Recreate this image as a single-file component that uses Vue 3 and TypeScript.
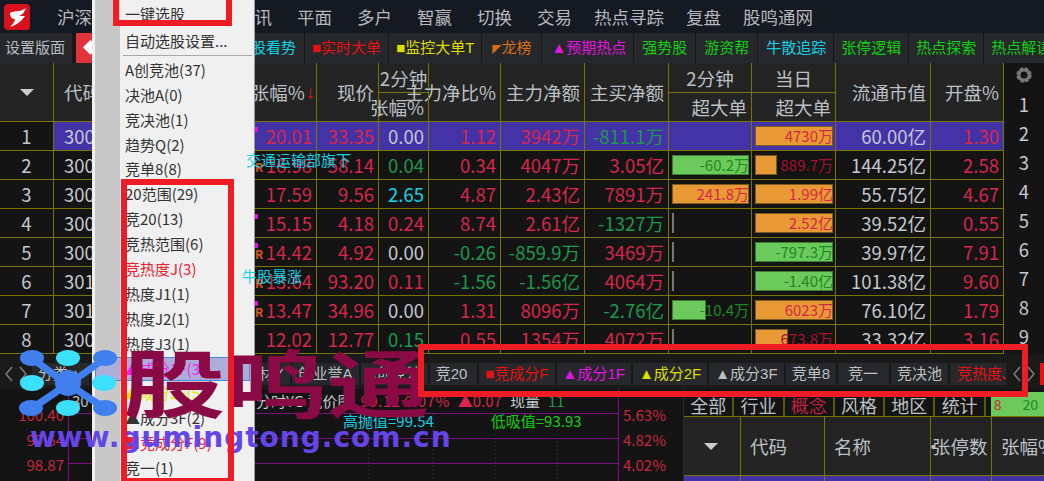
<template>
  <div class="app">
    <header class="menubar">
      <svg class="logo" viewBox="0 0 26 26" width="26" height="26">
        <rect width="26" height="26" rx="4" fill="#d8111c" />
        <path d="M6 9 C10 6 15 9 22 4 C20 9 18 11 15 12 L21 12 C17 18 12 21 6 23 C9 20 11 17 11 15 C8 15 6 13 6 9 Z" fill="#fff" />
      </svg>
      <nav class="menu-items">
        <span v-for="m in menus" :key="m" :class="{ long: m.length === 4 }">{{ m }}</span>
      </nav>
    </header>

    <div class="toolbar">
      <button v-for="t in tools" :key="t.label" class="tool" :class="t.cls">
        <small v-if="t.mark">{{ t.mark }}</small>{{ t.label }}
      </button>
    </div>

    <main class="board">
      <section class="quotes">
        <div class="thead">
          <div v-for="h in headers" :key="h.label + h.cls" class="th" :class="h.cls">
            {{ h.label }}<span v-if="h.cls.includes('sort')" class="sort-arrow">↓</span>
          </div>
        </div>
        <div v-for="(r, i) in rows" :key="r.no" class="tr" :class="{ selected: i === 0 }">
          <div class="td no">{{ r.no }}</div>
          <div class="td code">{{ r.code }}</div>
          <div class="td"></div>
          <div class="td red mark-cell">
            <i v-if="r.dot" class="dot"></i>
            <b v-if="r.tagR" class="tag-r">R</b>
            <span v-if="r.note" class="note" :class="r.noteCls">{{ r.note }}</span>
            {{ r.chg }}
          </div>
          <div class="td red">{{ r.price }}</div>
          <div class="td" :class="r.speedCls">{{ r.speed }}</div>
          <div class="td" :class="tone(r.ratio)">{{ r.ratio }}</div>
          <div class="td" :class="tone(r.net)">{{ r.net }}</div>
          <div class="td" :class="tone(r.buy)">{{ r.buy }}</div>
          <div class="td bar-cell">
            <i v-if="r.bar2" class="bar" :class="r.bar2.c" :style="{ width: r.bar2.w + '%' }"></i>
            <span class="bar-text" :class="r.bar2?.t">{{ r.bar2?.v }}</span>
          </div>
          <div class="td bar-cell">
            <i v-if="r.bar1" class="bar" :class="r.bar1.c" :style="{ width: r.bar1.w + '%' }"></i>
            <span class="bar-text" :class="r.bar1?.t">{{ r.bar1?.v }}</span>
          </div>
          <div class="td light">{{ r.cap }}</div>
          <div class="td red">{{ r.open }}</div>
        </div>
      </section>
      <aside class="rail">
        <svg class="gear" viewBox="0 0 20 20" width="18" height="18">
          <circle cx="10" cy="10" r="6.8" fill="none" stroke="#777" stroke-width="3.6" stroke-dasharray="3.6 1.75" />
          <circle cx="10" cy="10" r="5.6" fill="none" stroke="#777" stroke-width="3.4" />
        </svg>
        <span v-for="n in 9" :key="n">{{ n }}</span>
      </aside>
    </main>

    <div class="tabbar">
      <svg class="arrows" width="30" height="22" viewBox="0 0 30 22">
        <path d="M12 4 L6 11 L12 18M20 4 L26 11 L20 18" fill="none" stroke="#808080" stroke-width="1.4" />
      </svg>
      <span class="tab plain">分类▲</span>
      <span class="tab grow">题材Y</span>
      <span v-for="t in tabs" :key="t.label" class="tab" :class="t.cls">{{ t.label }}</span>
      <svg class="arrows" width="30" height="22" viewBox="0 0 30 22">
        <path d="M12 4 L6 11 L12 18M20 4 L26 11 L20 18" fill="none" stroke="#808080" stroke-width="1.4" />
      </svg>
      <i class="tab-flag"></i>
    </div>

    <div class="lower">
      <section class="chart">
        <svg class="grid" width="683" height="93" viewBox="0 0 683 93">
          <g stroke="#7d0f86" fill="none">
            <path d="M68.5 0V93M618.5 0V93M68 24.5H618M68 49.5H618M68 74.5H618" />
            <path d="M368.5 25V93M433.5 25V93M495.5 25V93M557.5 25V93" stroke-dasharray="1 3" />
          </g>
        </svg>
        <div class="chart-title">
          <span class="stock-code">30</span>
          <span class="light">分时YG 竞价图</span>
          <span class="red quote-now">99.12 0.07%</span>
          <span class="red">▲0.07</span>
          <span class="light">现量</span>
          <span class="green">11</span>
        </div>
        <div class="levels">
          <span class="cyan">高抛值=99.54</span>
          <span class="lime">低吸值=93.93</span>
        </div>
        <div class="axis left"><span>100.40</span><span>99.64</span><span>98.87</span></div>
        <div class="axis right"><span>5.63%</span><span>4.82%</span><span>4.02%</span></div>
      </section>

      <section class="sector">
        <div class="sector-tabs">
          <span v-for="s in sectorTabs" :key="s" :class="{ hot: s === '概念' }">{{ s }}</span>
          <div class="sector-meter"><em>8</em><b>20</b></div>
        </div>
        <div class="sector-head">
          <div class="sh arrow"><i class="tri"></i></div>
          <div class="sh">代码</div>
          <div class="sh name">名称<i>•</i></div>
          <div class="sh tight">张停数</div>
          <div class="sh">张幅%</div>
        </div>
        <div class="sector-row"><span></span><span></span><span>大模型</span><span></span><span></span></div>
      </section>
    </div>

    <!-- 下拉菜单 -->
    <div class="popup">
      <div class="popup-item first">一键选股</div>
      <div class="popup-item">自动选股设置...</div>
      <div class="popup-sep"></div>
      <div v-for="p in popup" :key="p.label" class="popup-item" :class="p.cls">{{ p.label }}</div>
    </div>

    <!-- 水印 -->
    <svg class="wm-logo" viewBox="0 0 116 70" width="116" height="70">
      <g stroke="#3f80ee" stroke-width="7" fill="none">
        <path d="M32 8 Q60 30 68 33 Q76 30 105 8M32 58 Q60 40 68 33 Q76 40 105 58" />
      </g>
      <circle cx="68" cy="33" r="13" fill="#3f80ee" />
      <g fill="#3f80ee">
        <ellipse cx="32" cy="8" rx="12" ry="8" />
        <ellipse cx="105" cy="8" rx="12" ry="8" />
        <ellipse cx="31" cy="58" rx="12" ry="8" />
        <ellipse cx="105" cy="58" rx="12" ry="8" />
      </g>
      <g fill="#3be0ff">
        <ellipse cx="68" cy="8" rx="12" ry="8" />
        <ellipse cx="32" cy="33" rx="12" ry="8" />
        <ellipse cx="104" cy="33" rx="12" ry="8" />
        <ellipse cx="68" cy="58" rx="12" ry="8" />
      </g>
    </svg>
    <div class="wm-title">股鸣通</div>
    <div class="wm-url">www.gumingtong.com.cn</div>

    <!-- 红色标注框 -->
    <i class="frame f1"></i>
    <i class="frame f2"></i>
    <i class="frame f3"></i>
  </div>
</template>

<script setup lang="ts">
interface Bar {
  v: string
  w: number
  c: string
  t: string
}

interface Row {
  no: number
  code: string
  chg: string
  price: string
  speed: string
  speedCls: string
  ratio: string
  net: string
  buy: string
  bar2?: Bar
  bar1?: Bar
  cap: string
  open: string
  dot?: boolean
  tagR?: boolean
  note?: string
  noteCls?: string
}

const menus = ['沪深', '板块', '选股', '资讯', '平面', '多户', '智赢', '切换', '交易', '热点寻踪', '复盘', '股鸣通网']

const tools = [
  { label: '设置版面', cls: 'gray first' },
  { label: '◆涨停', cls: 'redbg' },
  { label: '竞价大盘分析', cls: 'gray spacer' },
  { label: '个股看势', cls: 'cyan trail' },
  { label: '■实时大单', cls: 'red-t' },
  { label: '■监控大单T', cls: 'yellow' },
  { label: '龙榜', mark: '◤', cls: 'orange wide' },
  { label: '▲预期热点', cls: 'magenta wide-l' },
  { label: '强势股', cls: 'lime roomy' },
  { label: '游资帮', cls: 'lime roomy' },
  { label: '牛散追踪', cls: 'cyan lead' },
  { label: '张停逻辑', cls: 'lime' },
  { label: '热点探索', cls: 'lime' },
  { label: '热点解读', cls: 'lime' },
]

const headers = [
  { label: '', cls: 'span2 center caret' },
  { label: '代码', cls: 'span2 left' },
  { label: '', cls: 'span2' },
  { label: '张幅%', cls: 'span2 sort' },
  { label: '现价', cls: 'span2' },
  { label: '2分钟', cls: 'top center' },
  { label: '主力净比%', cls: 'span2' },
  { label: '主力净额', cls: 'span2' },
  { label: '主买净额', cls: 'span2' },
  { label: '2分钟', cls: 'top center' },
  { label: '当日', cls: 'top center' },
  { label: '流通市值', cls: 'span2' },
  { label: '开盘%', cls: 'span2' },
  { label: '张幅%', cls: 'bottom c6' },
  { label: '超大单', cls: 'bottom c10' },
  { label: '超大单', cls: 'bottom c11' },
]

const orange = (v: string, w: number, t = 'red'): Bar => ({ v, w, c: 'orange-bar', t })
const green = (v: string, w: number, t = 'dgreen'): Bar => ({ v, w, c: 'green-bar', t })
const sliver: Bar = { v: '', w: 3, c: 'gray-bar', t: '' }

const rows: Row[] = [
  { no: 1, code: '300', chg: '20.01', price: '33.35', speed: '0.00', speedCls: 'light', ratio: '1.12', net: '3942万', buy: '-811.1万', bar1: orange('4730万', 100), cap: '60.00亿', open: '1.30', dot: true },
  { no: 2, code: '300', chg: '16.98', price: '58.14', speed: '0.04', speedCls: 'green', ratio: '0.34', net: '4047万', buy: '3.05亿', bar2: green('-60.2万', 100), bar1: orange('889.7万', 26, 'dred'), cap: '144.25亿', open: '2.58', tagR: true, note: '交通运输部旗下', noteCls: 'note-a' },
  { no: 3, code: '300', chg: '17.59', price: '9.56', speed: '2.65', speedCls: 'cyan', ratio: '4.87', net: '2.43亿', buy: '7891万', bar2: orange('241.8万', 100), bar1: orange('1.99亿', 100), cap: '55.75亿', open: '4.67' },
  { no: 4, code: '300', chg: '15.15', price: '4.18', speed: '0.24', speedCls: 'red', ratio: '8.74', net: '2.61亿', buy: '-1327万', bar2: sliver, bar1: orange('2.52亿', 100), cap: '39.52亿', open: '0.55', dot: true },
  { no: 5, code: '300', chg: '14.42', price: '4.92', speed: '0.00', speedCls: 'light', ratio: '-0.26', net: '-859.9万', buy: '3469万', bar2: sliver, bar1: green('-797.3万', 100), cap: '39.97亿', open: '7.91', dot: true, tagR: true },
  { no: 6, code: '301', chg: '13.64', price: '93.20', speed: '0.11', speedCls: 'red', ratio: '-1.56', net: '-1.56亿', buy: '4064万', bar2: sliver, bar1: green('-1.40亿', 94), cap: '101.38亿', open: '9.60', tagR: true, note: '牛股暴涨', noteCls: 'note-b' },
  { no: 7, code: '301', chg: '13.47', price: '34.96', speed: '0.00', speedCls: 'light', ratio: '1.31', net: '8096万', buy: '-2.76亿', bar2: green('-10.4万', 41), bar1: orange('6023万', 100), cap: '76.10亿', open: '1.79', dot: true, tagR: true },
  { no: 8, code: '300', chg: '12.02', price: '12.77', speed: '0.15', speedCls: 'green', ratio: '0.55', net: '1354万', buy: '4072万', bar2: sliver, bar1: orange('673.8万', 40, 'dred'), cap: '33.32亿', open: '3.16' },
]

const tabs = [
  { label: '创业誉A', cls: 'plain' },
  { label: 'A创竞池', cls: 'plain' },
  { label: '竞20', cls: 'plain wide-r' },
  { label: '■竞成分F', cls: 'red-t' },
  { label: '▲成分1F', cls: 'magenta' },
  { label: '▲成分2F', cls: 'yellow' },
  { label: '▲成分3F', cls: 'plain' },
  { label: '竞单8', cls: 'plain' },
  { label: '竞一', cls: 'plain pad' },
  { label: '竞决池', cls: 'plain' },
  { label: '竞热度J', cls: 'red-t clip' },
]

const sectorTabs = ['全部', '行业', '概念', '风格', '地区', '统计']

const popup = [
  { label: 'A创竞池(37)', cls: '' },
  { label: '决池A(0)', cls: '' },
  { label: '竞决池(1)', cls: '' },
  { label: '趋势Q(2)', cls: '' },
  { label: '竞单8(8)', cls: '' },
  { label: '20范围(29)', cls: '' },
  { label: '竞20(13)', cls: '' },
  { label: '竞热范围(6)', cls: '' },
  { label: '竞热度J(3)', cls: 'p-red' },
  { label: '热度J1(1)', cls: '' },
  { label: '热度J2(1)', cls: '' },
  { label: '热度J3(1)', cls: '' },
  { label: '▲成分1F(3)', cls: 'p-active' },
  { label: '▲成分2F(5)', cls: 'p-yellow' },
  { label: '▲成分3F(2)', cls: '' },
  { label: '■竞成分F(9)', cls: 'p-red' },
  { label: '竞一(1)', cls: '' },
]

function tone(v: string) {
  return v.startsWith('-') ? 'green' : 'red'
}
</script>

<style>
html,
body {
  margin: 0;
  background: #141414;
}
</style>

<style scoped>
.app {
  position: relative;
  width: 1044px;
  height: 481px;
  overflow: hidden;
  display: flex;
  flex-direction: column;
  background: #141414;
  color: #bcc0c4;
  font-family: "Noto Sans CJK SC", "Noto Sans", sans-serif;
}

.menubar {
  height: 33px;
  flex: none;
  display: flex;
  align-items: center;
  background: #151922;
  box-sizing: border-box;
  padding-left: 4px;
}

.logo {
  flex: none;
}

.menu-items {
  display: flex;
  gap: 25px;
  margin-left: 27px;
  font-size: 17.5px;
  color: #b5b8bc;
}

.menu-items .long {
  margin: 0 -3px;
}

.toolbar {
  height: 30px;
  flex: none;
  display: flex;
  gap: 1px;
  background: #17181a;
  overflow: hidden;
}

.tool {
  flex: none;
  border: 0;
  margin: 0;
  padding: 0 7px;
  background: #26282b;
  font-family: "Liberation Sans", "Noto Sans CJK SC", sans-serif;
  font-size: 15px;
  line-height: 30px;
  white-space: nowrap;
}

.tool small {
  font-size: 9px;
}

.tool.first {
  padding: 0 7px 0 5px;
  margin-right: 3px;
}

.tool.wide {
  padding: 0 10px;
}

.tool.wide-l {
  padding: 0 7px 0 9px;
}

.tool.roomy {
  padding: 0 8px;
}

.tool.lead {
  padding: 0 7px 0 8px;
}

.tool.trail {
  padding: 0 8px 0 7px;
}

.tool.gray {
  color: #b8bcc0;
}

.tool.redbg {
  background: #e0343a;
  color: #fff;
}

.tool.spacer {
  padding: 0 0 0 2px;
}

.cyan {
  color: #13d2e6;
}

.red-t {
  color: #e81010;
}

.yellow {
  color: #dede00;
}

.orange {
  color: #dc6e14;
}

.magenta {
  color: #e414e4;
}

.lime {
  color: #0fd20f;
}

.red {
  color: #d8264a;
}

.dred {
  color: #a80f30;
}

.green {
  color: #1b9a4b;
}

.dgreen {
  color: #1d8a1d;
}

.light {
  color: #c4c8d0;
}

.board {
  display: flex;
  flex: none;
  height: 291px;
}

.quotes {
  width: 1004px;
  flex: none;
}

.thead,
.tr {
  display: grid;
  grid-template-columns: 54px 76px 110px 77px 62px 50px 72px 84px 84px 83px 84px 95px 73px;
}

.thead {
  grid-template-rows: 30px 29px;
  background: #242424;
  height: 59px;
  font-size: 18.5px;
}

.th {
  box-sizing: border-box;
  display: flex;
  align-items: center;
  justify-content: flex-end;
  padding-right: 4px;
  white-space: nowrap;
  border-right: 1px solid #757500;
  border-bottom: 1px solid #757500;
}

.th.span2 {
  grid-row: span 2;
}

.th.center {
  justify-content: center;
  padding-right: 0;
}

.th.left {
  justify-content: flex-start;
  padding-left: 10px;
}

.th.caret::before,
.tri {
  content: "";
  display: block;
  width: 0;
  height: 0;
  border-left: 7px solid transparent;
  border-right: 7px solid transparent;
  border-top: 7px solid #ccc;
}

.th.sort {
  padding-right: 1px;
}

.sort-arrow {
  color: #e81010;
  font-family: "Liberation Sans", sans-serif;
  margin-left: 1px;
}

.th.c6 {
  grid-column: 6;
  grid-row: 2;
}

.th.c10 {
  grid-column: 10;
  grid-row: 2;
}

.th.c11 {
  grid-column: 11;
  grid-row: 2;
}

.tr {
  height: 29px;
  font-size: 18.5px;
}

.tr.selected {
  background: #4433a6;
}

.td {
  box-sizing: border-box;
  position: relative;
  display: flex;
  align-items: center;
  justify-content: flex-end;
  padding-right: 4px;
  line-height: 28px;
  white-space: nowrap;
  border-right: 1px solid #757500;
  border-bottom: 1px solid #757500;
}

.td.no {
  justify-content: center;
  padding-right: 0;
  background: #141414;
  color: #c4c8d0;
}

.td.code {
  justify-content: flex-start;
  padding-left: 10px;
  color: #c4c8d0;
}

.dot {
  position: absolute;
  left: 15px;
  top: 5px;
  width: 3px;
  height: 5px;
  background: #e010e0;
}

.tag-r {
  position: absolute;
  left: 15px;
  top: 9px;
  font-size: 12px;
  line-height: 14px;
  color: #d9541e;
}

.note {
  position: absolute;
  top: -1px;
  font-size: 15px;
  line-height: 20px;
  color: #13d2e6;
  z-index: 2;
}

.note-a {
  right: -35px;
}

.note-b {
  right: 14px;
}

.bar-cell {
  padding: 0 1px 0 3px;
}

.bar {
  position: absolute;
  left: 3px;
  top: 4px;
  height: 20px;
  box-sizing: border-box;
  max-width: calc(100% - 5px);
  border: 1px solid #7a5a22;
}

.orange-bar {
  background: #e79a34;
}

.green-bar {
  background: #6cc95c;
  border-color: #3c7d32;
}

.gray-bar {
  background: #777;
  border: 0;
}

.bar-text {
  position: relative;
  font-size: 15px;
  padding-right: 1px;
}

.rail {
  width: 40px;
  flex: none;
  display: flex;
  flex-direction: column;
  align-items: center;
  font-size: 18.5px;
  color: #c4c8d0;
  line-height: 29px;
  background: #141414;
  padding-top: 3px;
  overflow: hidden;
}

.rail span {
  height: 29px;
  flex: none;
}

.gear {
  margin-bottom: 6px;
  flex: none;
}

.tabbar {
  height: 35px;
  flex: none;
  box-sizing: border-box;
  padding-top: 9px;
  display: flex;
  gap: 2px;
  background: #1a1a1a;
  font-family: "Liberation Sans", "Noto Sans CJK SC", sans-serif;
  font-size: 15px;
}

.arrows {
  flex: none;
}

.tab {
  flex: none;
  height: 22px;
  padding: 0 6px;
  line-height: 22px;
  background: #26282b;
  white-space: nowrap;
}

.tab.plain {
  color: #bcc0c4;
}

.tab.grow {
  flex: 1;
  text-align: right;
}

.tab.wide-r {
  padding-right: 10px;
}

.tab.pad {
  padding: 0 11px 0 10px;
}

.tab.clip {
  width: 46px;
  padding: 0 3px 0 7px;
  overflow: hidden;
}

.tab-flag {
  width: 4px;
  height: 22px;
  flex: none;
  background: #e81010;
}

.lower {
  flex: 1;
  min-height: 0;
  display: flex;
}

.chart {
  position: relative;
  width: 683px;
  flex: none;
  font-size: 15px;
}

.grid {
  position: absolute;
  left: 0;
  top: 0;
}

.chart-title {
  position: relative;
  display: flex;
  gap: 8px;
  padding-top: 1px;
  line-height: 22px;
  padding-left: 256px;
  white-space: nowrap;
}

.stock-code {
  position: absolute;
  left: 72px;
  top: 1px;
}

.quote-now {
  letter-spacing: 0.5px;
}

.levels {
  position: absolute;
  left: 343px;
  top: 22px;
  display: flex;
  gap: 57px;
  line-height: 20px;
}

.axis {
  position: absolute;
  top: 15px;
  display: flex;
  flex-direction: column;
  gap: 3px;
  color: #c8283c;
}

.axis span {
  line-height: 22px;
}

.axis.left {
  right: 619px;
  text-align: right;
}

.axis.right {
  left: 623px;
}

.sector {
  flex: 1;
  min-width: 0;
  border-left: 1px solid #2a2a2a;
}

.sector-tabs {
  height: 27px;
  display: flex;
  align-items: flex-end;
  font-size: 18px;
  color: #bcc0c4;
}

.sector-tabs span {
  box-sizing: border-box;
  width: 50.3px;
  height: 22px;
  line-height: 22px;
  text-align: center;
  border-right: 2px solid #5a5a00;
  white-space: nowrap;
}

.sector-tabs .hot {
  color: #c02040;
}

.sector-meter {
  flex: 1;
  height: 24px;
  margin-left: 5px;
  display: flex;
  justify-content: space-between;
  background: #6cc95c;
  font-size: 14px;
  line-height: 24px;
  padding: 0 6px 0 3px;
  overflow: hidden;
}

.sector-meter em {
  font-style: normal;
  color: #c03030;
}

.sector-meter b {
  font-weight: 400;
  color: #1d8a1d;
}

.sector-head,
.sector-row {
  display: grid;
  grid-template-columns: 57px 84px 106px 61px 53px;
}

.sector-head {
  height: 60px;
  background: #242424;
  font-size: 18.5px;
  border-top: 1px solid #757500;
  border-bottom: 1px solid #757500;
  box-sizing: border-box;
}

.sh {
  box-sizing: border-box;
  display: flex;
  align-items: center;
  padding-left: 9px;
  white-space: nowrap;
  border-right: 1px solid #757500;
}

.sh.arrow {
  padding-left: 20px;
}

.sh.name i {
  margin-left: 53px;
  font-style: normal;
}

.sh.tight {
  padding-left: 1px;
}

.sector-row {
  height: 10px;
  background: #4433a6;
  font-size: 17px;
  line-height: 30px;
}

.sector-row span {
  border-right: 1px solid #757500;
  padding-left: 12px;
  color: #c4c8d0;
  overflow: hidden;
  white-space: nowrap;
}

.popup {
  position: absolute;
  left: 92px;
  top: 0;
  width: 163px;
  height: 481px;
  box-sizing: border-box;
  padding-top: 2px;
  background: linear-gradient(to right, #f0f0f0 3px, #c8c8c8 3px, #c8c8c8 28px, #f0f0f0 28px);
  border-right: 1px solid #9a9a9a;
  font-size: 15px;
  color: #333;
}

.popup-item {
  box-sizing: border-box;
  height: 24.9px;
  line-height: 24.9px;
  padding-left: 33px;
  white-space: nowrap;
}

.popup-item.first {
  height: 27px;
}

.popup-sep {
  height: 1px;
  margin: 1px 2px 2px 31px;
  background: #a8a8a8;
}

.p-red {
  color: #ee2030;
}

.p-yellow {
  color: #e4e400;
}

.p-active {
  margin-left: 3px;
  margin-right: 4px;
  padding-left: 30px;
  background: #adadd9;
  outline: 1px solid #3a90e0;
  outline-offset: -1px;
  color: #f020f0;
}

.wm-logo {
  position: absolute;
  left: 0;
  top: 350px;
  overflow: visible;
}

.wm-title {
  position: absolute;
  left: 123px;
  top: 335px;
  font-size: 74px;
  line-height: 90px;
  font-weight: 700;
  color: #8a0a45;
  transform: scaleX(1.38);
  transform-origin: left top;
  white-space: nowrap;
}

.wm-url {
  position: absolute;
  left: 30px;
  top: 420px;
  font-family: "DejaVu Sans", sans-serif;
  font-size: 28px;
  line-height: 36px;
  font-weight: 700;
  letter-spacing: 1px;
  color: #6345ea;
  white-space: nowrap;
}

.frame {
  position: absolute;
  box-sizing: border-box;
  border: 6px solid #ee1c25;
}

.f1 {
  left: 113px;
  top: -6px;
  width: 119px;
  height: 32px;
}

.f2 {
  left: 121px;
  top: 179px;
  width: 113px;
  height: 305px;
}

.f3 {
  left: 418px;
  top: 344px;
  width: 610px;
  height: 53px;
}
</style>
